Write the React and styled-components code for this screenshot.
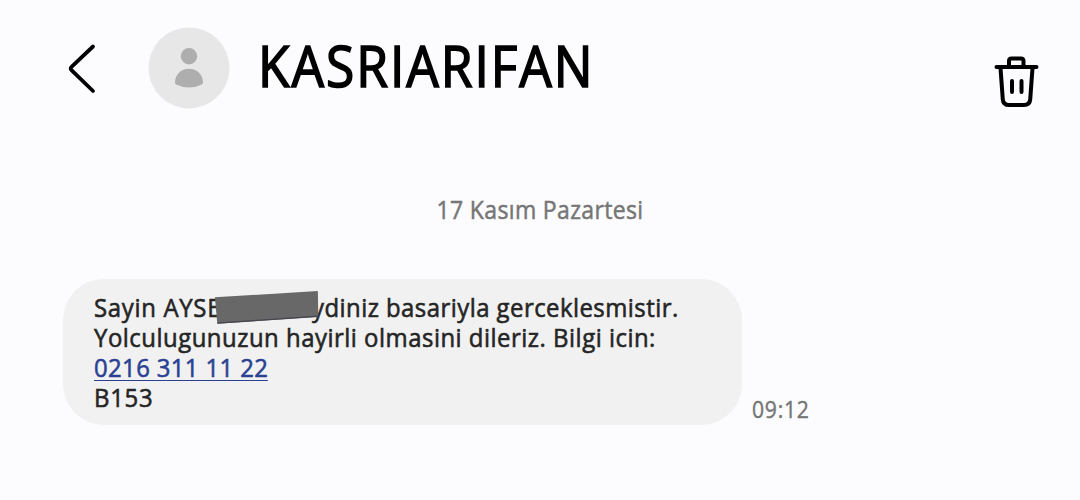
import React from 'react';
import styled, { createGlobalStyle } from 'styled-components';

const GlobalStyle = createGlobalStyle`
    body {
        margin: 0;
        background: #fcfcfe;
        font-family: 'Open Sans', 'Noto Sans', sans-serif;
    }
`;

const Screen = styled.div`
    box-sizing: border-box;
    width: 1080px;
    height: 500px;
    overflow: hidden;
    background: #fcfcfe;
`;

const Header = styled.header`
    box-sizing: border-box;
    display: flex;
    align-items: center;
    height: 136px;
    padding: 0 36px 0 62px;
`;

const IconButton = styled.button`
    display: flex;
    padding: 0;
    border: 0;
    background: none;
    color: #000;
    margin-top: ${props => props.$drop || '0'};
`;

const Avatar = styled.div`
    width: 82px;
    height: 82px;
    margin-left: 46px;
`;

const Sender = styled.h1`
    flex: 1;
    margin: 0 0 6px 27.5px;
    font-size: 56px;
    font-weight: 400;
    line-height: 80px;
    letter-spacing: 2.1px;
    -webkit-text-stroke: 1.6px #000;
    color: #000;
    transform: scaleX(.92);
    transform-origin: left;
`;

const DateLabel = styled.div`
    margin-top: 57px;
    text-align: center;
    font-size: 25px;
    line-height: 32px;
    letter-spacing: .38px;
    -webkit-text-stroke: .5px #767676;
    color: #767676;
    transform: scaleX(.92);
`;

const MessageRow = styled.div`
    display: flex;
    align-items: flex-end;
    margin: 54px 0 0 63px;
`;

const Bubble = styled.div`
    box-sizing: border-box;
    width: 679px;
    height: 146px;
    padding: 13px 31px;
    border-radius: 41px;
    background: #f1f1f1;
    font-size: 26px;
    line-height: 30px;
    -webkit-text-stroke: .6px;
    color: #252525;
`;

const Line = styled.div`
    position: relative;
    display: flex;
    width: 635.5px;
    height: 30px;
    white-space: pre;
    transform: scaleX(.92);
    transform-origin: left;
`;

const Words = styled.span`
    letter-spacing: ${props => props.$spacing};
`;

const Redacted = styled.span`
    flex: 1;
`;

const Cover = styled.svg`
    position: absolute;
    top: -2px;
    left: 130.4px;
`;

const PhoneLink = styled.a`
    height: 28px;
    border-bottom: 1px solid #2a4193;
    color: #2a4193;
    letter-spacing: .4px;
`;

const Time = styled.span`
    margin-bottom: 1px;
    margin-left: 10px;
    font-size: 23px;
    line-height: 30px;
    letter-spacing: .8px;
    -webkit-text-stroke: .4px #767676;
    color: #767676;
    transform: scaleX(.92);
    transform-origin: left;
`;

const App = () => (
    <Screen>
        <GlobalStyle />
        <Header>
            <IconButton aria-label="Geri">
                <svg width="40" height="56" viewBox="62 40 40 56" fill="none">
                    <path d="M93 46.5L71.5 66.9Q69.8 68.5 71.5 70.2L93 91" stroke="currentColor" strokeWidth="3.8" strokeLinecap="round" />
                </svg>
            </IconButton>
            <Avatar>
                <svg width="82" height="82" viewBox="148 27 82 82" fill="#aeaeae">
                    <circle cx="189" cy="67.9" r="40.5" fill="#e7e7e7" />
                    <circle cx="189" cy="56.3" r="8.2" />
                    <path d="M175 82.5C175 74.5 181 68.7 189 68.7S203 74.5 203 82.5Q203 83.8 201.8 84.4Q196 87.4 189 87.4T176.2 84.4Q175 83.8 175 82.5Z" />
                </svg>
            </Avatar>
            <Sender>KASRIARIFAN</Sender>
            <IconButton aria-label="Sil" $drop="28px">
                <svg width="52" height="56" viewBox="992 54 52 56" fill="none" stroke="currentColor" strokeWidth="4" strokeLinecap="round" strokeLinejoin="round">
                    <path d="M996.5 67H1036.5M1009 66V61Q1009 58.5 1011.5 58.5H1021Q1023.5 58.5 1023.5 61V66" />
                    <path d="M1000.5 68L1002.8 99.5Q1003.3 105 1009 105H1024Q1029.7 105 1030.2 99.5L1032.5 68" />
                    <path d="M1012 81V92M1021.5 81V92" />
                </svg>
            </IconButton>
        </Header>
        <DateLabel>17 Kasım Pazartesi</DateLabel>
        <MessageRow>
            <Bubble>
                <Line>
                    <Words $spacing=".75px">Sayin AYSE</Words>
                    <Redacted />
                    <Words $spacing=".5px">ydiniz basariyla gerceklesmistir.</Words>
                    <Cover width="115.2" height="36" viewBox="214 290 106 36" preserveAspectRatio="none">
                        <path d="M215.3 297.3L318.3 291L318.7 316.7L217.7 323.7Z" fill="#686868" />
                        <path d="M217.7 322.4L318.7 315.6V317L217.7 323.7Z" fill="#46474e" />
                    </Cover>
                </Line>
                <Line><Words $spacing=".55px">Yolculugunuzun hayirli olmasini dileriz. Bilgi icin:</Words></Line>
                <Line><PhoneLink>0216 311 11 22</PhoneLink></Line>
                <Line><Words $spacing=".8px">B153</Words></Line>
            </Bubble>
            <Time>09:12</Time>
        </MessageRow>
    </Screen>
);

export default App;
